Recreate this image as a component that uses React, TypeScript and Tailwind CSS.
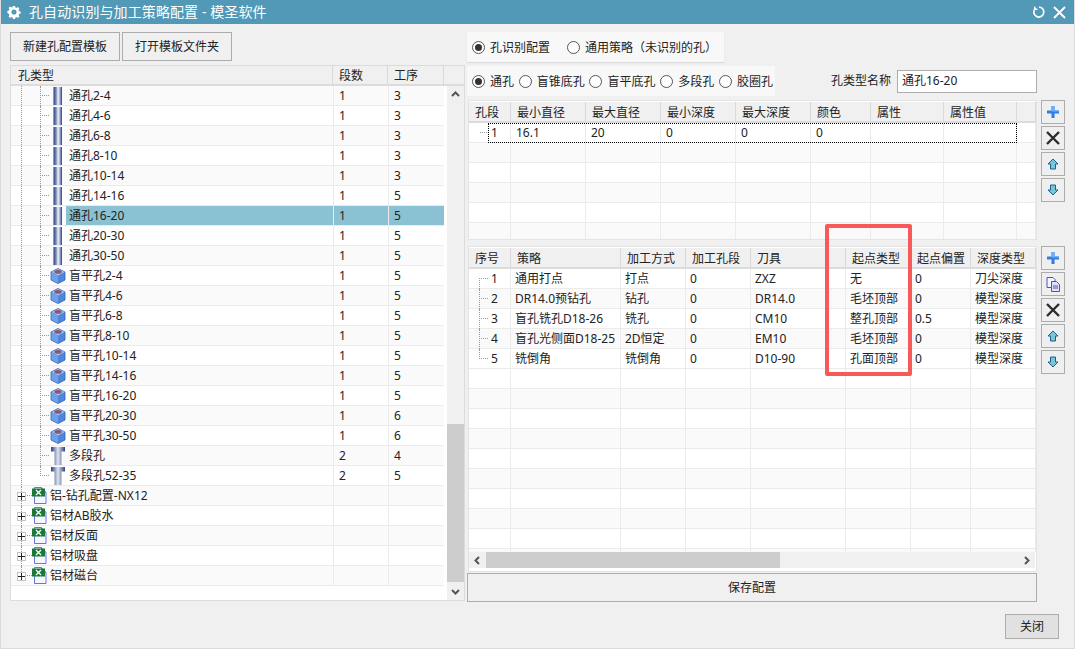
import { ReactNode } from "react";

const FONT = "font-['Noto_Sans','Noto_Sans_CJK_SC',sans-serif]";

type TreeRow = { name: string; seg: string; proc: string; kind: "through" | "blind" | "multi" | "file" };

const through = ["2-4", "4-6", "6-8", "8-10", "10-14", "14-16", "16-20", "20-30", "30-50"];

const treeRows: TreeRow[] = [
  ...through.map((s, i) => ({ name: "通孔" + s, seg: "1", proc: i < 5 ? "3" : "5", kind: "through" as const })),
  ...through.map((s, i) => ({ name: "盲平孔" + s, seg: "1", proc: i < 7 ? "5" : "6", kind: "blind" as const })),
  { name: "多段孔", seg: "2", proc: "4", kind: "multi" },
  { name: "多段孔52-35", seg: "2", proc: "5", kind: "multi" },
  { name: "铝-钻孔配置-NX12", seg: "", proc: "", kind: "file" },
  { name: "铝材AB胶水", seg: "", proc: "", kind: "file" },
  { name: "铝材反面", seg: "", proc: "", kind: "file" },
  { name: "铝材吸盘", seg: "", proc: "", kind: "file" },
  { name: "铝材磁台", seg: "", proc: "", kind: "file" },
];

const topCols = [42, 75, 75, 75, 75, 60, 73, 73, 19];
const topHead = ["孔段", "最小直径", "最大直径", "最小深度", "最大深度", "颜色", "属性", "属性值", ""];
const topRow = ["1", "16.1", "20", "0", "0", "0", "", "", ""];

const botCols = [42, 110, 65, 65, 95, 65, 60, 65];
const botHead = ["序号", "策略", "加工方式", "加工孔段", "刀具", "起点类型", "起点偏置", "深度类型"];
const botRows = [
  ["1", "通用打点", "打点", "0", "ZXZ", "无", "0", "刀尖深度"],
  ["2", "DR14.0预钻孔", "钻孔", "0", "DR14.0", "毛坯顶部", "0", "模型深度"],
  ["3", "盲孔铣孔D18-26", "铣孔", "0", "CM10", "整孔顶部", "0.5", "模型深度"],
  ["4", "盲孔光侧面D18-25", "2D恒定", "0", "EM10", "毛坯顶部", "0", "模型深度"],
  ["5", "铣倒角", "铣倒角", "0", "D10-90", "孔面顶部", "0", "模型深度"],
];

function ThroughIcon() {
  return (
    <svg width="10" height="18" viewBox="0 0 10 18" className="shrink-0">
      <defs>
        <linearGradient id="tg" x1="0" x2="1" y1="0" y2="0">
          <stop offset="0" stopColor="#24386f" />
          <stop offset="0.35" stopColor="#8f9fc8" />
          <stop offset="0.55" stopColor="#f2f4fa" />
          <stop offset="0.8" stopColor="#8798c4" />
          <stop offset="1" stopColor="#2c4178" />
        </linearGradient>
      </defs>
      <rect x="0.5" y="0" width="8.5" height="18" fill="url(#tg)" />
    </svg>
  );
}

function BlindIcon() {
  return (
    <svg width="16" height="16" viewBox="0 0 16 16" className="shrink-0">
      <path d="M8 .5 15 4v8l-7 3.500L1 12V4z" fill="#4f86dc" stroke="#2f5fb0" strokeWidth="0.8" />
      <path d="M8 1 14.500 4 8 7.500 1.500 4z" fill="#a9c8f4" />
      <path d="M8 7.800V15L1.500 11.800V4.500z" fill="#6ea0ea" />
      <ellipse cx="8" cy="3.900" rx="3.800" ry="1.800" fill="#7d5f80" />
      <ellipse cx="8" cy="3.400" rx="2.600" ry="0.800" fill="#c8403f" />
    </svg>
  );
}

function MultiIcon() {
  return (
    <svg width="14" height="18" viewBox="0 0 14 18" className="shrink-0">
      <defs>
        <linearGradient id="mg" x1="0" x2="1" y1="0" y2="0">
          <stop offset="0" stopColor="#2d3f72" />
          <stop offset="0.5" stopColor="#dfe4f0" />
          <stop offset="1" stopColor="#2d4278" />
        </linearGradient>
      </defs>
      <path d="M0 0h14v4.500h-3.500V18h-7V4.500H0z" fill="url(#mg)" />
    </svg>
  );
}

function FileIcon() {
  return (
    <svg width="15" height="17" viewBox="0 0 15 17" className="shrink-0">
      <path d="M2.500 .5h7l4.500 4.500v11.500h-11.500z" fill="#f5f7ff" stroke="#6a72e0" />
      <path d="M9.500 .5v4.500h4.500" fill="#cfd4f6" stroke="#6a72e0" />
      <rect x="0" y="1.500" width="13" height="8" fill="#167a34" />
      <path d="M4 3 9 8M9 3 4 8" stroke="#fff" strokeWidth="1.400" />
    </svg>
  );
}

function RowIcon({ kind }: { kind: TreeRow["kind"] }) {
  if (kind === "through") return <div className="w-4 flex justify-center"><ThroughIcon /></div>;
  if (kind === "blind") return <div className="w-4 flex justify-center"><BlindIcon /></div>;
  if (kind === "multi") return <div className="w-4 flex justify-center"><MultiIcon /></div>;
  return <FileIcon />;
}

function Expander() {
  return (
    <div className="w-[9px] h-[9px] border border-[#c4c4c4] bg-white flex items-center justify-center shrink-0">
      <svg width="7" height="7" viewBox="0 0 7 7"><path d="M0 3.500h7M3.500 0v7" stroke="#222" /></svg>
    </div>
  );
}

function Tree() {
  return (
    <div>
      {treeRows.map((r, i) => {
        const selected = r.name === "通孔16-20";
        const isFile = r.kind === "file";
        const lastChild = r.name === "多段孔52-35";
        const lastFile = r.name === "铝材磁台";
        return (
          <div key={r.name} className={`flex h-5 border-b border-[#ebebeb] ${i % 2 ? "bg-white" : "bg-[#fafafa]"}`}>
            <div className="w-[322px] flex h-full">
              <div className="w-[10px] shrink-0 h-full" />
              {isFile ? (
                <div className="relative w-[11px] shrink-0 h-full flex items-center">
                  <div className={`absolute left-0 top-0 border-l border-dotted border-[#999] ${lastFile ? "h-[10px]" : "h-5"}`} />
                  <div className="absolute left-[4px] w-[7px] top-[9px] border-t border-dotted border-[#999]" />
                  <div className="absolute left-[-4px] top-[6px]"><Expander /></div>
                </div>
              ) : (
                <>
                  <div className="w-[19px] shrink-0 h-full border-l border-dotted border-[#999]" />
                  <div className="relative w-[10px] shrink-0 h-full">
                    <div className={`absolute left-0 top-0 border-l border-dotted border-[#999] ${lastChild ? "h-[10px]" : "h-5"}`} />
                    <div className="absolute left-0 w-[9px] top-[9px] border-t border-dotted border-[#999]" />
                  </div>
                </>
              )}
              <div className={`shrink-0 flex items-center ${isFile ? "w-[18px]" : "w-4"}`}>
                <RowIcon kind={r.kind} />
              </div>
              <div className={`flex-1 flex items-center ${isFile ? "" : "pl-[3px]"} ${selected ? "bg-[#8ac2d3]" : ""}`}>
                {r.name}
              </div>
            </div>
            <div className={`w-[55px] pl-[5px] flex items-center border-l border-[#ebebeb] ${selected ? "bg-[#8ac2d3]" : ""}`}>{r.seg}</div>
            <div className={`w-[56px] pl-[5px] flex items-center border-l border-[#ebebeb] ${selected ? "bg-[#8ac2d3]" : ""}`}>{r.proc}</div>
          </div>
        );
      })}
    </div>
  );
}

function Chevron({ dir }: { dir: "up" | "down" | "left" | "right" }) {
  const d = { up: "M1 6 4.500 2.500 8 6", down: "M1 3 4.500 6.500 8 3", left: "M6 1 2.500 4.500 6 8", right: "M3 1 6.500 4.500 3 8" }[dir];
  return (
    <svg width="9" height="9" viewBox="0 0 9 9">
      <path d={d} fill="none" stroke="#555" strokeWidth="2" />
    </svg>
  );
}

function Radio({ on, label }: { on?: boolean; label: string }) {
  return (
    <div className="flex items-center gap-[5px]">
      <div className="w-[13px] h-[13px] rounded-full border border-[#555] flex items-center justify-center bg-white">
        {on && <div className="w-[7px] h-[7px] rounded-full bg-[#333]" />}
      </div>
      <span className="pt-[2px]">{label}</span>
    </div>
  );
}

function ToolBtn({ children }: { children: ReactNode }) {
  return (
    <div className="w-6 h-6 border border-[#adadad] bg-[#efefef] flex items-center justify-center">{children}</div>
  );
}

const PlusIcon = () => (
  <svg width="14" height="14" viewBox="0 0 14 14">
    <path d="M5.500 1h3v4.500H13v3H8.500V13h-3V8.500H1v-3h4.500z" fill="#2f7de8" />
    <path d="M5.500 1h3v4.500H13v1H5.500z" fill="#6fb0f5" />
  </svg>
);

const CrossIcon = () => (
  <svg width="16" height="16" viewBox="0 0 16 16">
    <path d="M2 2 14 14M14 2 2 14" stroke="#2b2b2b" strokeWidth="2.400" />
  </svg>
);

const UpIcon = () => (
  <svg width="12" height="12" viewBox="0 0 12 12">
    <path d="M6 1 11 6H8.500v5h-5V6H1z" fill="#79c6d6" stroke="#1f5f96" />
  </svg>
);

const DownIcon = () => (
  <svg width="12" height="12" viewBox="0 0 12 12">
    <path d="M6 11 1 6h2.500V1h5v5H11z" fill="#79c6d6" stroke="#1f5f96" />
  </svg>
);

const CopyIcon = () => (
  <svg width="14" height="15" viewBox="0 0 14 15">
    <path d="M1 .5h6l2 2v8H1z" fill="#f4f5ff" stroke="#4b50c8" />
    <path d="M5.500 4.500h5l3 3v7h-8z" fill="#dfe2fb" stroke="#4b50c8" />
    <path d="M7 9h5M7 11h5" stroke="#4b50c8" />
  </svg>
);

function HeaderCell({ w, text, pl = "pl-[6px]" }: { w: number; text: string; pl?: string }) {
  return (
    <div
      style={{ width: w }}
      className={`h-full shrink-0 flex items-center border-r border-[#d9d9d9] pt-[2px] ${pl}`}
    >
      {text}
    </div>
  );
}

const emptyTop = [0, 1, 2, 3, 4];
const emptyBot = Array.from({ length: 9 }, (_, i) => i);

function TopTable() {
  return (
    <div className="h-[140px] border border-[#e3e3e3] bg-white overflow-hidden">
      <div className="flex h-[21px] mt-px bg-[#f0f0f0] border-b-2 border-[#dcdcdc]">
        {topHead.map((h, i) => (
          <HeaderCell key={i} w={topCols[i]} text={h} />
        ))}
      </div>
      <div className="relative flex h-5 border-b border-[#ebebeb]">
        {topRow.map((c, i) => (
          <div
            key={i}
            style={{ width: topCols[i] }}
            className={`shrink-0 h-full flex items-center border-r border-[#ebebeb] ${i === 0 ? "pl-[22px]" : "pl-[5px]"}`}
          >
            {c}
          </div>
        ))}
        <div className="absolute left-[11px] top-[9px] w-[9px] border-t border-dotted border-[#999]" />
        <div className="absolute left-[19px] top-0 w-[529px] h-5 border border-dotted border-black" />
      </div>
      {emptyTop.map((n) => (
        <div key={n} className={`flex h-5 border-b border-[#ebebeb] ${n % 2 ? "bg-white" : "bg-[#fafafa]"}`}>
          {topCols.map((w, i) => (
            <div key={i} style={{ width: w }} className="shrink-0 h-full border-r border-[#ebebeb]" />
          ))}
        </div>
      ))}
    </div>
  );
}

function BottomTable() {
  return (
    <div className="h-[326px] border border-[#e3e3e3] bg-white flex flex-col overflow-hidden">
      <div className="flex h-[21px] mt-px bg-[#f0f0f0] border-b-2 border-[#dcdcdc] shrink-0">
        {botHead.map((h, i) => (
          <HeaderCell key={i} w={botCols[i]} text={h} />
        ))}
      </div>
      {botRows.map((row, n) => (
        <div key={n} className={`relative flex h-5 border-b border-[#ebebeb] shrink-0 ${n % 2 ? "bg-[#fafafa]" : "bg-white"}`}>
          {row.map((c, i) => (
            <div
              key={i}
              style={{ width: botCols[i] }}
              className={`shrink-0 h-full flex items-center border-r border-[#ebebeb] whitespace-nowrap ${i === 0 ? "pl-[22px]" : "pl-[4px]"}`}
            >
              {c}
            </div>
          ))}
          <div
            className={`absolute left-[10px] border-l border-dotted border-[#999] ${n === 0 ? "top-[9px] h-[11px]" : n === 4 ? "top-0 h-[10px]" : "top-0 h-5"}`}
          />
          <div className="absolute left-[10px] top-[9px] w-[9px] border-t border-dotted border-[#999]" />
        </div>
      ))}
      {emptyBot.map((n) => (
        <div key={n} className={`flex h-5 shrink-0 border-b border-[#ebebeb] ${n % 2 ? "bg-[#fafafa]" : "bg-white"}`}>
          {botCols.map((w, i) => (
            <div key={i} style={{ width: w }} className="shrink-0 h-full border-r border-[#ebebeb]" />
          ))}
        </div>
      ))}
      <div className="flex-1 flex bg-[#fafafa]">
        {botCols.map((w, i) => (
          <div key={i} style={{ width: w }} className="shrink-0 h-full border-r border-[#ebebeb]" />
        ))}
      </div>
      <div className="h-[16px] mb-[3px] mr-px flex items-center bg-[#f0f0f0] shrink-0">
        <div className="w-[17px] flex justify-center"><Chevron dir="left" /></div>
        <div className="w-[294px] h-full bg-[#cdcdcd]" />
        <div className="flex-1" />
        <div className="w-[17px] flex justify-center"><Chevron dir="right" /></div>
      </div>
    </div>
  );
}

export default function App() {
  return (
    <div className={`relative w-[1075px] h-[649px] overflow-hidden bg-[#f0f0f0] border-x border-b border-[#dcdcdc] text-[12px] leading-none text-[#222] ${FONT}`}>
      {/* 标题栏 */}
      <div className="h-6 bg-[#5199b6] flex items-center text-white">
        <svg width="14" height="14" viewBox="0 0 16 16" className="ml-[6px]">
          <path
            d="M6.800 1h2.400l.4 1.800 1.300.6 1.600-1 1.700 1.700-1 1.600.6 1.300 1.800.4v2.400l-1.800.4-.6 1.300 1 1.600-1.700 1.700-1.600-1-1.300.6-.4 1.800H6.800l-.4-1.800-1.300-.6-1.600 1-1.700-1.700 1-1.600-.6-1.300L.4 9.200V6.800l1.800-.4.6-1.300-1-1.600 1.700-1.700 1.600 1 1.300-.6z"
            fill="#fff"
          />
          <circle cx="8" cy="8" r="2.900" fill="#5199b6" />
        </svg>
        <span className="ml-[8px] text-[14px] tracking-[0.1px]">孔自动识别与加工策略配置 - 模圣软件</span>
        <div className="flex-1" />
        <svg width="14" height="14" viewBox="0 0 14 14" className="mr-[7px]">
          <path d="M3.200 3.500A5 5 0 1 0 7 2" fill="none" stroke="#fff" strokeWidth="1.700" />
          <path d="M2 1v4h4z" fill="#fff" />
        </svg>
        <svg width="13" height="13" viewBox="0 0 13 13" className="mr-[8px]">
          <path d="M1 1 12 12M12 1 1 12" stroke="#fff" strokeWidth="1.800" />
        </svg>
      </div>

      <div className="flex pl-[9px] pt-[8px]">
        {/* 左侧 */}
        <div className="w-[455px] shrink-0">
          <div className="flex gap-[2px]">
            <div className="w-[110px] h-[29px] border border-[#adadad] flex items-center justify-center">新建孔配置模板</div>
            <div className="w-[110px] h-[29px] border border-[#adadad] flex items-center justify-center">打开模板文件夹</div>
          </div>
          <div className="mt-[4px] h-[536px] border border-[#dcdcdc] bg-white flex flex-col">
            <div className="flex h-5 bg-[#f0f0f0] border-b-2 border-[#dcdcdc] shrink-0">
              <HeaderCell w={322} text="孔类型" pl="pl-[7px]" />
              <HeaderCell w={55} text="段数" />
              <HeaderCell w={56} text="工序" />
            </div>
            <div className="flex flex-1">
              <div className="w-[433px] shrink-0 overflow-hidden">
                <Tree />
              </div>
              <div className="ml-[3px] flex-1 bg-[#f0f0f0] flex flex-col items-center">
                <div className="h-[17px] flex items-center"><Chevron dir="up" /></div>
                <div className="h-[321px]" />
                <div className="w-full h-[158px] bg-[#cdcdcd]" />
                <div className="flex-1 flex items-center"><Chevron dir="down" /></div>
              </div>
            </div>
          </div>
        </div>

        {/* 右侧 */}
        <div className="ml-[2px] w-[570px] shrink-0">
          <div className="w-[257px] h-[30px] bg-[#f8f8f8] shadow-[0_1px_1px_#dcdcdc] flex items-center pl-[5px] gap-[17px]">
            <Radio on label="孔识别配置" />
            <Radio label="通用策略（未识别的孔）" />
          </div>
          <div className="mt-[4px] flex items-center h-[30px]">
            <div className="w-[308px] h-full bg-[#f8f8f8] flex items-center pl-[5px] justify-between pr-[2px]">
              <Radio on label="通孔" />
              <Radio label="盲锥底孔" />
              <Radio label="盲平底孔" />
              <Radio label="多段孔" />
              <Radio label="胶圈孔" />
            </div>
            <span className="ml-[56px]">孔类型名称</span>
            <div className="ml-[6px] w-[140px] h-[23px] border border-[#adadad] bg-white flex items-center pl-[4px]">通孔16-20</div>
          </div>
          <div className="flex mt-[4px] ml-px">
            <div className="flex flex-col">
              <TopTable />
              <div className="h-[6px]" />
              <BottomTable />
            </div>
            <div className="ml-[4px] flex flex-col">
              <div className="flex flex-col gap-[2px]">
                <ToolBtn><PlusIcon /></ToolBtn>
                <ToolBtn><CrossIcon /></ToolBtn>
                <ToolBtn><UpIcon /></ToolBtn>
                <ToolBtn><DownIcon /></ToolBtn>
              </div>
              <div className="mt-[44px] flex flex-col gap-[2px]">
                <ToolBtn><PlusIcon /></ToolBtn>
                <ToolBtn><CopyIcon /></ToolBtn>
                <ToolBtn><CrossIcon /></ToolBtn>
                <ToolBtn><UpIcon /></ToolBtn>
                <ToolBtn><DownIcon /></ToolBtn>
              </div>
            </div>
          </div>
          <div className="mt-px w-[570px] h-[29px] border border-[#adadad] flex items-center justify-center">保存配置</div>
        </div>
      </div>

      <div className="flex justify-end pr-[15px] mt-[12px]">
        <div className="w-[54px] h-[25px] border border-[#adadad] bg-[#e1e1e1] flex items-center justify-center">关闭</div>
      </div>

      {/* 红色标注框 */}
      <div className="absolute left-[824px] top-[224px] w-[87px] h-[152px] border-[4px] border-[#f85a5a] rounded-[2px]" />
    </div>
  );
}
